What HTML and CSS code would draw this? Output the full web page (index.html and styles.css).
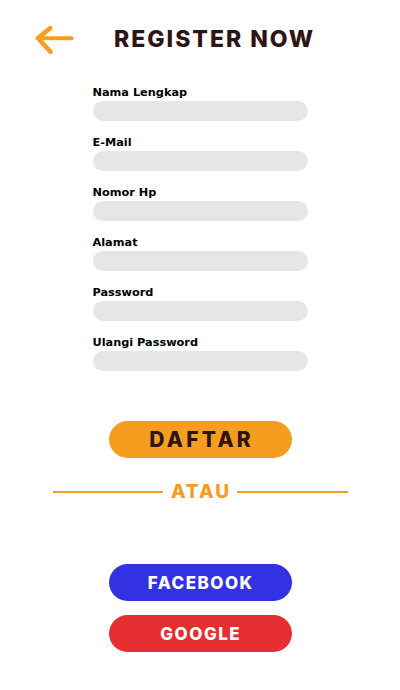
FILE: index.html
```html
<!DOCTYPE html>
<html lang="id">
<head>
<meta charset="utf-8">
<title>Register Now</title>
<link rel="stylesheet" href="styles.css">
</head>
<body>
<div class="page">
  <header class="header">
    <svg class="back" width="40" height="30" viewBox="0 0 40 30" aria-hidden="true">
      <path d="M16 4.3 L4 14.3 L16.5 27.7" fill="none" stroke="#F59D1E" stroke-width="4.6" stroke-linecap="round" stroke-linejoin="round"/>
      <path d="M4 14.3 L37.5 14.3" fill="none" stroke="#F59D1E" stroke-width="4" stroke-linecap="round"/>
    </svg>
    <h1 class="title">REGISTER NOW</h1>
  </header>

  <form class="form">
    <div class="field"><label class="label">Nama Lengkap</label><input class="input" type="text"></div>
    <div class="field"><label class="label">E-Mail</label><input class="input" type="email"></div>
    <div class="field"><label class="label">Nomor Hp</label><input class="input" type="tel"></div>
    <div class="field"><label class="label">Alamat</label><input class="input" type="text"></div>
    <div class="field"><label class="label">Password</label><input class="input" type="password"></div>
    <div class="field"><label class="label">Ulangi Password</label><input class="input" type="password"></div>
  </form>

  <div class="actions">
    <button class="btn btn-daftar" type="button">DAFTAR</button>
  </div>

  <div class="divider">
    <span class="line"></span>
    <span class="atau">ATAU</span>
    <span class="line"></span>
  </div>

  <div class="social">
    <button class="btn btn-social btn-facebook" type="button">FACEBOOK</button>
    <button class="btn btn-social btn-google" type="button">GOOGLE</button>
  </div>
</div>
</body>
</html>
```

FILE: styles.css
```css
* { box-sizing: border-box; }

html, body {
  margin: 0;
  padding: 0;
  background: #ffffff;
}

body {
  font-family: "DejaVu Sans", sans-serif;
  width: 400px;
  height: 690px;
  overflow: hidden;
}

.page {
  display: flex;
  flex-direction: column;
}

.header {
  height: 78px;
  display: flex;
  align-items: center;
  padding-left: 34px;
  gap: 40px;
}

.back {
  display: block;
  flex: none;
}

.title {
  margin: 0;
  font-family: Inter, "Liberation Sans", sans-serif;
  font-weight: 800;
  font-size: 23px;
  letter-spacing: 2px;
  color: #2E1414;
  line-height: 1;
}

.form {
  width: 215px;
  margin: 0 auto;
  padding-top: 8px;
  display: flex;
  flex-direction: column;
  gap: 15px;
}

.field {
  display: flex;
  flex-direction: column;
}

.label {
  font-family: "DejaVu Sans", sans-serif;
  font-weight: bold;
  font-size: 11.3px;
  line-height: 13px;
  color: #000000;
  margin-bottom: 2px;
}

.input {
  display: block;
  width: 100%;
  height: 20px;
  border: none;
  border-radius: 10px;
  background: #E6E6E6;
  padding: 0 10px;
  outline: none;
}

.btn {
  display: flex;
  align-items: center;
  justify-content: center;
  width: 183px;
  height: 37px;
  border: none;
  border-radius: 18.5px;
  margin: 0 auto;
  padding: 0;
  font-family: Inter, "Liberation Sans", sans-serif;
  font-weight: 800;
  cursor: pointer;
}

.actions {
  margin-top: 50px;
}

.btn-daftar {
  background: #F59D1E;
  color: #2E1414;
  font-size: 21px;
  letter-spacing: 3.3px;
  padding-left: 3.3px;
}

.divider {
  width: 295px;
  margin: 24px auto 0;
  height: 20px;
  display: flex;
  align-items: center;
  gap: 8px;
}

.line {
  flex: 1;
  height: 2px;
  background: #F59D1E;
}

.atau {
  font-family: Inter, "Liberation Sans", sans-serif;
  font-weight: 800;
  font-size: 19px;
  letter-spacing: 2px;
  margin-right: -2px;
  color: #F59D1E;
  line-height: 20px;
}

.social {
  margin-top: 62px;
  display: flex;
  flex-direction: column;
  gap: 14px;
}

.btn-social {
  color: #ffffff;
  font-size: 17px;
  letter-spacing: 1.5px;
  padding-left: 1.5px;
}

.btn-facebook { background: #3232E2; }
.btn-google { background: #E52E30; }
```
